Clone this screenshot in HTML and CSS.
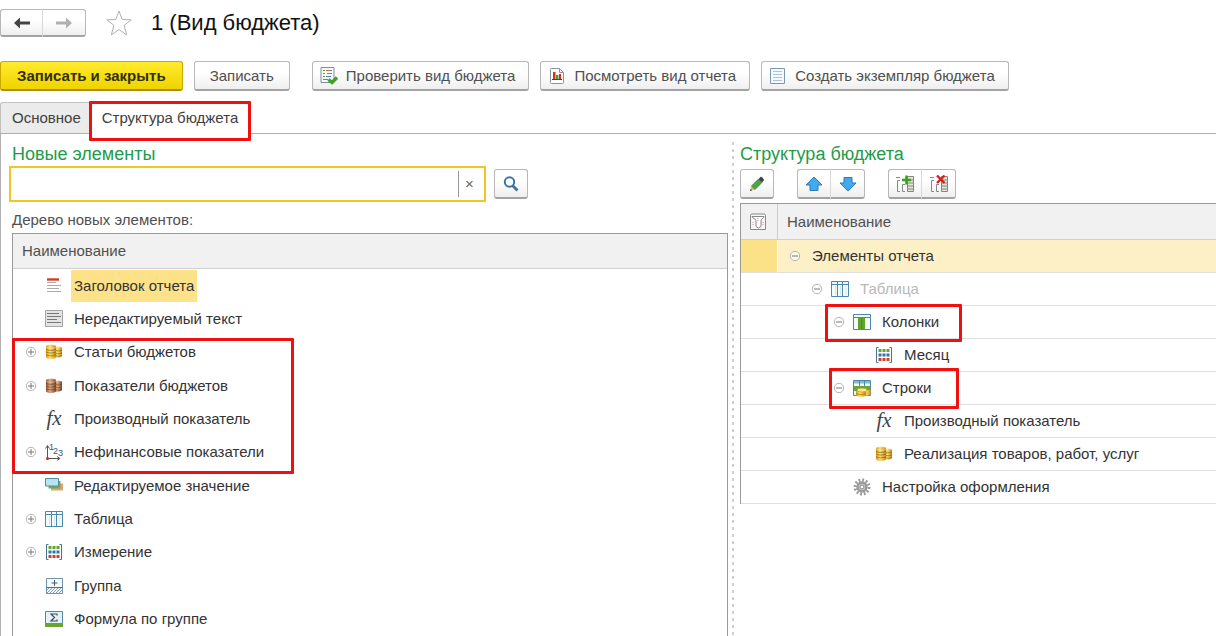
FILE: index.html
```html
<!DOCTYPE html>
<html lang="ru">
<head>
<meta charset="utf-8">
<title>1 (Вид бюджета)</title>
<link rel="stylesheet" href="styles.css">
</head>
<body>
<svg class="sprite" aria-hidden="true">
  <defs>
    <linearGradient id="gold" x1="0" x2="1"><stop offset="0" stop-color="#d99a12"/><stop offset=".4" stop-color="#ffe275"/><stop offset="1" stop-color="#c98a10"/></linearGradient>
    <linearGradient id="bronze" x1="0" x2="1"><stop offset="0" stop-color="#8f4f30"/><stop offset=".4" stop-color="#e0ab86"/><stop offset="1" stop-color="#7c452c"/></linearGradient>
    <pattern id="hatch" width="3" height="3" patternUnits="userSpaceOnUse"><path d="M-1 4 4-1M-1 1 1-1M2 4 4 2" stroke="#5f8698" stroke-width=".8"/></pattern>
  </defs>
  <symbol id="plus" viewBox="0 0 12 12"><circle cx="6" cy="6" r="4.700" fill="#fff" stroke="#b4b4b4"/><path d="M3 6h6M6 3v6" stroke="#777"/></symbol>
  <symbol id="minus" viewBox="0 0 12 12"><circle cx="6" cy="6" r="4.700" fill="#fff" fill-opacity=".6" stroke="#b4b4b4"/><path d="M3 6h6" stroke="#777"/></symbol>
  <symbol id="title" viewBox="0 0 18 18"><path d="M2 2.500h12" stroke="#d43a24" stroke-width="2.400"/><path d="M2 5.500h9M2 8.500h14M2 11.500h12M2 14.500h14" stroke="#aaa"/></symbol>
  <symbol id="text" viewBox="0 0 18 18"><path d="M.5.5h17v16H.5z" fill="#e4e4e4" stroke="#a5a5a5"/><path d="M2 3.500h12M2 6.500h14M2 9.500h10M2 12.500h14" stroke="#777"/></symbol>
  <symbol id="coins" viewBox="0 0 18 18"><path d="M9 5.500v8c0 1 2 1.500 4 1.300s4-1 4-2v-8z"/><ellipse cx="13" cy="5" rx="4" ry="1.600" fill-opacity=".75"/><path d="M1 3.500v10.500c0 1.500 2.500 2 5 2s5-.8 5-2V3.500z"/><ellipse cx="6" cy="3.500" rx="5" ry="1.900" stroke="#fff" stroke-opacity=".5" stroke-width=".6"/><path d="M1 6c1 1.800 8.500 1.800 10 0M1 8.700c1 1.800 8.500 1.800 10 0M1 11.400c1 1.800 8.500 1.800 10 0M11 7.500c2 .8 5 .4 6-.5M11 10.300c2 .8 5 .4 6-.5M11 12.800c2 .8 5 .4 6-.5" fill="none" stroke="#5a3000" stroke-opacity=".55" stroke-width=".9"/></symbol>
  <symbol id="cards" viewBox="0 0 18 18"><path d="M6 6.500h12v7H6z" fill="#e3a079"/><path d="M3.500 4h12v7.500h-12z" fill="#72ad4c"/><path d="M.5 1.500h13v7.500H.5z" fill="#b9e3ee" stroke="#528fa7"/></symbol>
  <symbol id="table" viewBox="0 0 18 18"><path d="M.5 1.500h17v15H.5z" fill="#f4fafc" stroke="#4c89a8"/><path d="M1 4.500h16" stroke="#4c89a8"/><path d="M6.500 2v14M11.500 2v14" stroke="#4c89a8"/><path d="M4.500 6v9M9.500 6v9M15 6v9" stroke="#d5e6ee"/></symbol>
  <symbol id="column" viewBox="0 0 18 18"><path d="M.5 1.500h17v15H.5z" fill="#f4fafc" stroke="#4c89a8"/><path d="M1 4.500h16" stroke="#4c89a8"/><path d="M5 4.500h7V16H5z" fill="#60a52b"/><path d="M8.500 5v11" stroke="#4b8f22"/></symbol>
  <symbol id="rows" viewBox="0 0 18 18"><path d="M.5 1.500h17v15H.5z" fill="#f4fafc" stroke="#4c89a8"/><path d="M1 2h16v2.500H1z" fill="#86b8d0"/><path d="M6.500 2v5M11.500 2v5" stroke="#4c89a8"/><path d="M1 7h16v5H1z" fill="#65a83c"/><path d="M9 11v4c1 2 7 2 9 0v-4z" fill="url(#gold)"/><path d="M3 12v4c1 2.500 9 2.500 10 0v-4z" fill="url(#gold)"/><ellipse cx="9" cy="11" rx="5" ry="2" fill="#ffe98e" stroke="#b98512" stroke-width=".6"/><path d="M3 14c1 2 9 2 10 0" fill="none" stroke="#a87509" stroke-width=".8"/></symbol>
  <symbol id="dims" viewBox="0 0 18 18"><path d="M3.500 1.500h-2v15h2M14.500 1.500h2v15h-2" fill="none" stroke="#477487"/><path d="M3.500 3h3v3h-3zM7.500 3h3v3h-3zM11.500 3h3v3h-3z" fill="#63a62f"/><path d="M3.500 7.500h3v3h-3zM7.500 7.500h3v3h-3zM11.500 7.500h3v3h-3z" fill="#2f75b5"/><path d="M3.500 12h3v3h-3zM7.500 12h3v3h-3zM11.500 12h3v3h-3z" fill="#cf4229"/></symbol>
  <symbol id="group" viewBox="0 0 18 18"><path d="M1.500 1.500h16v15h-16z" fill="#f4f9fc" stroke="#7295a5"/><path d="M2 10.500h15v6H2z" fill="url(#hatch)"/><path d="M1 10.500h17" stroke="#47778e"/><path d="M9.500 3v6M6.500 6h6" stroke="#47606e"/></symbol>
  <symbol id="sigma" viewBox="0 0 18 18"><path d="M.5 1.500h17v15H.5z" fill="#e4f2f8" stroke="#5588a0"/><path d="M0 13h18v4H0z" fill="#67a532"/><path d="M12 5.500V4H6l3.500 3.500L6 11h6V9.500" fill="none" stroke="#3a4d59" stroke-width="1.200"/></symbol>
  <symbol id="gear" viewBox="0 0 18 18"><circle cx="9" cy="9" r="7" fill="none" stroke="#999" stroke-width="3" stroke-dasharray="1.800 1.865"/><circle cx="9" cy="9" r="4.500" fill="#c9c9c9" stroke="#999" stroke-width="2.400"/><circle cx="9" cy="9" r="2" fill="#fff" stroke="#888"/></symbol>
</svg>

<header class="head">
  <div class="btn-group">
    <button class="btn nav" type="button" aria-label="Назад"><svg width="18" height="14" viewBox="0 0 18 14"><path d="M1 7l6-5.500v4h10v3H7v4z" fill="#444"/></svg></button>
    <button class="btn nav" type="button" aria-label="Вперед"><svg width="18" height="14" viewBox="0 0 18 14"><path d="M17 7l-6-5.500v4H1v3h10v4z" fill="#b0b0b0"/></svg></button>
  </div>
  <button class="star" type="button" aria-label="В избранное"><svg width="28" height="28" viewBox="0 0 28 28"><path d="M14 2l3.200 8.500 9 .3-7.100 5.500L21.700 26 14 20.500 6.300 26l2.600-9.700-7.100-5.500 9-.3z" fill="#fff" stroke="#b0b0b0"/></svg></button>
  <h1>1 (Вид бюджета)</h1>
</header>

<div class="commands">
  <button class="btn primary" type="button">Записать и закрыть</button>
  <button class="btn save" type="button">Записать</button>
  <button class="btn with-icon" type="button"><svg width="18" height="18" viewBox="0 0 18 18"><path d="M1 .5h13v15H1z" fill="#f6f9fb" stroke="#7890a0"/><path d="M3 3.500h2M3 6.500h2M3 9.500h2" stroke="#5a9b34"/><path d="M6 3.500h4M7 6.500h5" stroke="#d0674b"/><path d="M10 3.500h2M6 9.500h5M3 12.500h5" stroke="#5b83bd"/><path d="M8.500 12.500l3.500 3L17 10.500" fill="none" stroke="#3da31c" stroke-width="3.400"/></svg>Проверить вид бюджета</button>
  <button class="btn with-icon" type="button"><svg width="18" height="18" viewBox="0 0 18 18"><path d="M3.500 1.500h8l4 4v10q0 1-1 1h-11q-1 0-1-1v-13q0-1 1-1z" fill="#fff" stroke="#8a949c"/><path d="M11.500 1.500v4h4" fill="none" stroke="#8a949c"/><path d="M5 5h2.500v7H5zM11 7h2v5h-2z" fill="#d5321f"/><path d="M8 8h2.500v4H8z" fill="#4f9a33"/><path d="M4 12.500h10" stroke="#444"/></svg>Посмотреть вид отчета</button>
  <button class="btn with-icon" type="button"><svg width="18" height="18" viewBox="0 0 18 18"><path d="M1.500 1.500h14v15h-14z" fill="#f3f9fc" stroke="#7d98a8"/><path d="M4 4.500h9M4 7.500h9M4 10.500h9M4 13.500h9" stroke="#a9c6d6"/></svg>Создать экземпляр бюджета</button>
</div>

<nav class="tabs">
  <a class="tab" href="#main">Основное</a>
  <a class="tab active" href="#structure" aria-current="page">Структура бюджета<span class="mark mark-tab"></span></a>
</nav>

<main class="panes">
  <section class="pane left">
    <h2>Новые элементы</h2>
    <div class="search">
      <div class="field">
        <input type="text" aria-label="Поиск новых элементов">
        <button class="clear" type="button" aria-label="Очистить">×</button>
      </div>
      <button class="btn tool" type="button" aria-label="Найти"><svg width="18" height="18" viewBox="0 0 18 18"><path d="M10.500 10.500L15.500 15.500" stroke="#3a75a8" stroke-width="2.800"/><circle cx="7.500" cy="7" r="4.700" fill="#fff" stroke="#3a75a8" stroke-width="2"/></svg></button>
    </div>
    <p class="caption">Дерево новых элементов:</p>
    <table class="grid">
      <thead><tr><th>Наименование</th></tr></thead>
      <tbody>
        <tr><td><div class="node"><span class="toggle"></span><svg class="icon"><use href="#title"/></svg><span class="label picked">Заголовок отчета</span></div></td></tr>
        <tr><td><div class="node"><span class="toggle"></span><svg class="icon"><use href="#text"/></svg><span class="label">Нередактируемый текст</span></div></td></tr>
        <tr><td><div class="node"><button class="toggle" type="button" aria-label="Развернуть"><svg><use href="#plus"/></svg></button><svg class="icon gold"><use href="#coins"/></svg><span class="label">Статьи бюджетов</span><span class="mark mark-items"></span></div></td></tr>
        <tr><td><div class="node"><button class="toggle" type="button" aria-label="Развернуть"><svg><use href="#plus"/></svg></button><svg class="icon bronze"><use href="#coins"/></svg><span class="label">Показатели бюджетов</span></div></td></tr>
        <tr><td><div class="node"><span class="toggle"></span><span class="icon fx">fx</span><span class="label">Производный показатель</span></div></td></tr>
        <tr><td><div class="node"><button class="toggle" type="button" aria-label="Развернуть"><svg><use href="#plus"/></svg></button><svg class="icon" viewBox="0 0 18 18"><path d="M2.500 15V3M.5 5.500l2-3 2 3M2.500 15.500H14M12 13.500l3 2-3 2" fill="none" stroke="#555"/><circle cx="2.500" cy="15.500" r="1.500" fill="#c22"/><text class="digits"><tspan x="4" y="7">1</tspan><tspan x="8" y="11">2</tspan><tspan x="13" y="13">3</tspan></text></svg><span class="label">Нефинансовые показатели</span></div></td></tr>
        <tr><td><div class="node"><span class="toggle"></span><svg class="icon"><use href="#cards"/></svg><span class="label">Редактируемое значение</span></div></td></tr>
        <tr><td><div class="node"><button class="toggle" type="button" aria-label="Развернуть"><svg><use href="#plus"/></svg></button><svg class="icon"><use href="#table"/></svg><span class="label">Таблица</span></div></td></tr>
        <tr><td><div class="node"><button class="toggle" type="button" aria-label="Развернуть"><svg><use href="#plus"/></svg></button><svg class="icon"><use href="#dims"/></svg><span class="label">Измерение</span></div></td></tr>
        <tr><td><div class="node"><span class="toggle"></span><svg class="icon"><use href="#group"/></svg><span class="label">Группа</span></div></td></tr>
        <tr><td><div class="node"><span class="toggle"></span><svg class="icon"><use href="#sigma"/></svg><span class="label">Формула по группе</span></div></td></tr>
      </tbody>
    </table>
  </section>

  <section class="pane right">
    <h2>Структура бюджета</h2>
    <div class="tools">
      <button class="btn tool" type="button" aria-label="Изменить"><svg width="18" height="18" viewBox="0 0 18 18"><path d="M2 16l1.500-5 3.500 3.500z" fill="#e9b56d"/><path d="M2 16l.7-2 1.300 1.300z" fill="#222"/><path d="M3.500 11l7-7L14 7.500l-7 7z" fill="#4ca647" stroke="#39703a" stroke-width=".7"/><path d="M10.500 4l2.200-2.200c.6-.6 3.800 2.600 3.300 3.500L14 7.500z" fill="#444"/></svg></button>
      <div class="btn-group">
        <button class="btn tool" type="button" aria-label="Вверх"><svg width="18" height="18" viewBox="0 0 18 18"><path d="M9 2l8 8h-4v5.500H5V10H1z" fill="#42aaf0" stroke="#2b7bb5"/></svg></button>
        <button class="btn tool" type="button" aria-label="Вниз"><svg width="18" height="18" viewBox="0 0 18 18"><path d="M9 16L1 8h4V2.500h8V8h4z" fill="#42aaf0" stroke="#2b7bb5"/></svg></button>
      </div>
      <div class="btn-group">
        <button class="btn tool" type="button" aria-label="Развернуть все"><svg width="20" height="20" viewBox="0 0 20 20"><path d="M1 3.500h4M5 6.500H2.500v11H5M10 10.500H7.500v7H10" fill="none" stroke="#888"/><path d="M12.500 2.500h6v15h-6zM13 6h5M13 9h5M13 12h5M13 15h5" fill="#e3e3dc" stroke="#888878"/><path d="M11.500 1.500v9M7 6h9" stroke="#35a51f" stroke-width="2.600"/></svg></button>
        <button class="btn tool" type="button" aria-label="Свернуть все"><svg width="20" height="20" viewBox="0 0 20 20"><path d="M1 3.500h4M5 6.500H2.500v11H5M10 10.500H7.500v7H10" fill="none" stroke="#888"/><path d="M12.500 2.500h6v15h-6zM13 6h5M13 9h5M13 12h5M13 15h5" fill="#e3e3dc" stroke="#888878"/><path d="M8 1.500l7.500 7.500M15.500 1.500L8 9" stroke="#cf2222" stroke-width="2.400"/></svg></button>
      </div>
    </div>
    <table class="grid structure">
      <thead><tr>
        <th class="flag"><svg width="18" height="18" viewBox="0 0 18 18"><path d="M1.500 2.500Q1.500 1 3 1h12q1.500 0 1.500 1.500v14h-15z" fill="#f7f7f7" stroke="#888"/><path d="M3 3.500h12c0 2-3 2-3 4v6q-3 3-5 0v-6c0-2-4-2-4-4z" fill="#fff" stroke="#888"/><path d="M4 9v3M14 9v3M9 5v4" stroke="#c99" stroke-dasharray="1 1"/></svg></th>
        <th>Наименование</th>
      </tr></thead>
      <tbody>
        <tr class="current"><td class="flag"></td><td><div class="node"><button class="toggle" type="button" aria-label="Свернуть"><svg><use href="#minus"/></svg></button><span class="label">Элементы отчета</span></div></td></tr>
        <tr><td class="flag"></td><td><div class="node level-1"><button class="toggle" type="button" aria-label="Свернуть"><svg><use href="#minus"/></svg></button><svg class="icon"><use href="#table"/></svg><span class="label muted">Таблица</span></div></td></tr>
        <tr><td class="flag"></td><td><div class="node level-2"><button class="toggle" type="button" aria-label="Свернуть"><svg><use href="#minus"/></svg></button><svg class="icon"><use href="#column"/></svg><span class="label">Колонки</span><span class="mark mark-columns"></span></div></td></tr>
        <tr><td class="flag"></td><td><div class="node level-3"><span class="toggle"></span><svg class="icon"><use href="#dims"/></svg><span class="label">Месяц</span></div></td></tr>
        <tr><td class="flag"></td><td><div class="node level-2"><button class="toggle" type="button" aria-label="Свернуть"><svg><use href="#minus"/></svg></button><svg class="icon"><use href="#rows"/></svg><span class="label">Строки</span><span class="mark mark-rows"></span></div></td></tr>
        <tr><td class="flag"></td><td><div class="node level-3"><span class="toggle"></span><span class="icon fx">fx</span><span class="label">Производный показатель</span></div></td></tr>
        <tr><td class="flag"></td><td><div class="node level-3"><span class="toggle"></span><svg class="icon gold"><use href="#coins"/></svg><span class="label">Реализация товаров, работ, услуг</span></div></td></tr>
        <tr><td class="flag"></td><td><div class="node level-2"><span class="toggle"></span><svg class="icon"><use href="#gear"/></svg><span class="label">Настройка оформления</span></div></td></tr>
      </tbody>
    </table>
  </section>
</main>
</body>
</html>
```
FILE: styles.css
```css
* { box-sizing: border-box; }

body {
  margin: 0;
  min-height: 100vh;
  display: flex;
  flex-direction: column;
  background: #fff;
  color: #404040;
  font: 15px/18px "Liberation Sans", Arial, sans-serif;
}

h1, h2, p { margin: 0; font-weight: 400; }
button, input { font: inherit; color: inherit; }
button { padding: 0; border: 0; background: none; }
svg { display: block; flex: none; }
.sprite { position: absolute; width: 0; height: 0; }

.head { display: flex; align-items: center; height: 46px; }
h1 { color: #111; font-size: 22px; line-height: 28px; margin-left: 18px; }
.star { margin-left: 19px; }

.btn {
  display: flex;
  align-items: center;
  justify-content: center;
  height: 30px;
  border: 1px solid #b8b8b8;
  border-bottom: 2px solid #a3a3a3;
  border-radius: 3px;
  background: linear-gradient(#fff 40%, #efefef);
  color: #505050;
}
.btn-group { display: flex; }
.btn-group .btn:first-child { border-right-color: #d8d8d8; border-radius: 3px 0 0 3px; }
.btn-group .btn:last-child { border-left: 0; border-radius: 0 3px 3px 0; }
.nav { width: 43px; height: 28px; }

.commands { display: flex; align-items: center; margin-top: 15px; gap: 11px; }
.primary {
  padding: 0 16px;
  border-color: #c9a800;
  border-bottom-color: #a89000;
  background: linear-gradient(#ffea2e, #f0d400);
  color: #333000;
  font-weight: 700;
}
.save { padding: 0 15px; margin-right: 11px; }
.with-icon { padding: 0 13px 0 7px; gap: 8px; }

.tabs {
  display: flex;
  margin-top: 11px;
  height: 32px;
  border-bottom: 1px solid #b0b0b0;
}
.tab {
  position: relative;
  padding: 6px 8px 0 11px;
  border: 1px solid #c0c0c0;
  border-width: 1px 0 0 1px;
  border-radius: 3px 0 0 0;
  background: #ebebeb;
  color: #404040;
  height: 31px;
  text-decoration: none;
}
.tab.active { height: 32px; padding: 6px 13px 0; background: #fff; border-left: 0; border-radius: 0; }

.panes {
  flex: 1;
  display: grid;
  grid-template-columns: 3fr 2fr;
  border-left: 1px solid #b0b0b0;
}
.pane { display: flex; flex-direction: column; padding-top: 9px; min-width: 0; }
.left { padding-left: 11px; padding-right: 2px; }
.right { margin-left: 2px; padding-left: 8px; position: relative; }
.right::before {
  content: "";
  position: absolute;
  inset: 8px auto 0 0;
  width: 2px;
  background: repeating-linear-gradient(#d0d0d0 0 3px, transparent 3px 7px);
}
h2 { color: #1e9b4b; font-size: 18px; line-height: 22px; margin-bottom: 1px; }

.search { display: flex; align-items: center; gap: 8px; margin-left: -3px; }
.field {
  display: flex;
  align-items: center;
  width: 477px;
  height: 36px;
  border: 2px solid #f0c623;
  background: #fff;
}
.field input { flex: 1; min-width: 0; height: 30px; border: 0; outline: 0; padding: 0 6px; background: none; }
.clear { width: 26px; height: 26px; padding-right: 4px; border-left: 1px solid #999; color: #666; }
.tool { width: 34px; }
.caption { color: #505050; margin: 9px 0 4px; }

.tools { display: flex; gap: 23px; margin-top: 3px; margin-bottom: 4px; }

.grid { width: 100%; border-collapse: separate; border-spacing: 0; border: 1px solid #999; border-bottom: 0; }
.grid th {
  height: 35px;
  padding: 0 9px;
  border-bottom: 1px solid #d0d0d0;
  background: #f1f1f1;
  color: #505050;
  font-weight: 400;
  text-align: left;
}
.grid td { padding: 0; color: #333; }
.left .grid { flex: 1; }
.left .grid tbody { vertical-align: top; }
.structure { border-right: 0; }
.structure th { height: 36px; }
.structure th.flag { width: 37px; padding: 0 8px; border-right: 1px solid #ccc; }
.structure td { border-bottom: 1px solid #e0e0e0; }

.node { position: relative; display: flex; align-items: center; gap: 8px; height: 33px; padding-left: 12px; }
.structure .node { height: 32px; padding-left: 11px; }
.structure .level-1 { padding-left: 33px; }
.structure .level-2 { padding-left: 55px; }
.structure .level-3 { padding-left: 77px; }
.toggle, .toggle svg { width: 12px; height: 12px; }
.icon { width: 18px; height: 18px; }
.gold { fill: url(#gold); }
.bronze { fill: url(#bronze); }
.label { padding: 0 3px; }
.picked { background: #fde28a; line-height: 32px; }
.muted { color: #b8b8b8; }
.current td { background: #fdf0c6; }
.current td.flag { background: #fbe289; border-right: 1px solid #fff; }

.fx { font: italic 21px/16px "Liberation Serif", serif; color: #444; text-align: center; }
.digits { font: 9px "Liberation Sans", sans-serif; fill: #28607c; }
svg.icon { overflow: visible; }

.mark { position: absolute; z-index: 1; border: 3px solid #f01010; border-radius: 1px; pointer-events: none; }
.mark-tab { inset: -2px 0 -7px 0; }
.mark-items { left: -1px; top: 2px; width: 282px; height: 136px; }
.mark-columns { left: 47px; top: -2px; width: 137px; height: 38px; }
.mark-rows { left: 51px; top: -4px; width: 130px; height: 41px; }
```
